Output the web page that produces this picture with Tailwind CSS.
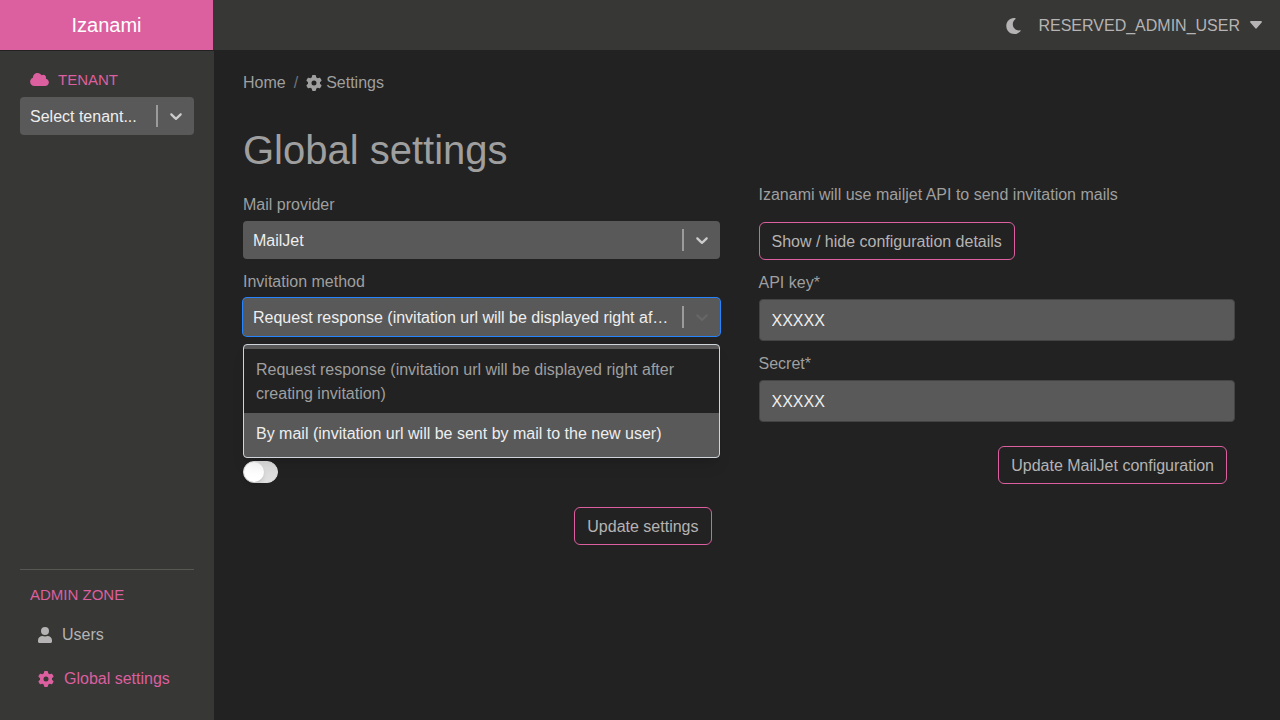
<!DOCTYPE html>
<html lang="en">
<head>
<meta charset="utf-8">
<meta name="viewport" content="width=device-width, initial-scale=1">
<title>Izanami - Global settings</title>
<script src="https://cdn.jsdelivr.net/npm/@tailwindcss/browser@4"></script>
</head>
<body class="flex min-h-screen flex-col bg-[#222222] font-['Liberation_Sans',Arial,sans-serif] text-base text-[#9f9f9f]">
<svg class="hidden" aria-hidden="true">
  <symbol id="gear" viewBox="0 0 512 512"><path fill="currentColor" d="M495.9 166.6c3.2 8.7 .5 18.4-6.4 24.6l-43.3 39.4c1.1 8.3 1.7 16.8 1.7 25.4s-.6 17.1-1.7 25.4l43.3 39.4c6.9 6.2 9.6 15.9 6.4 24.6c-4.4 11.9-9.7 23.3-15.8 34.3l-4.7 8.1c-6.6 11-14 21.4-22.1 31.2c-5.9 7.2-15.7 9.6-24.5 6.8l-55.7-17.7c-13.4 10.3-28.2 18.9-44 25.4l-12.5 57.1c-2 9.1-9 16.3-18.2 17.8c-13.8 2.3-28 3.5-42.5 3.5s-28.7-1.2-42.5-3.5c-9.2-1.5-16.2-8.7-18.2-17.8l-12.5-57.1c-15.8-6.5-30.6-15.1-44-25.4L83.100 425.9c-8.800 2.800-18.600 .3-24.500-6.800c-8.100-9.800-15.500-20.200-22.100-31.200l-4.700-8.100c-6.100-11-11.400-22.400-15.800-34.300c-3.200-8.700-.5-18.400 6.400-24.600l43.300-39.400C64.600 273.100 64 264.600 64 256s.6-17.100 1.700-25.400L22.400 191.200c-6.900-6.200-9.600-15.900-6.400-24.600c4.400-11.900 9.700-23.300 15.800-34.300l4.700-8.100c6.600-11 14-21.400 22.100-31.200c5.900-7.200 15.700-9.600 24.500-6.800l55.700 17.700c13.400-10.300 28.200-18.900 44-25.400l12.500-57.100c2-9.100 9-16.300 18.200-17.800C227.300 1.200 241.500 0 256 0s28.700 1.200 42.500 3.500c9.200 1.500 16.200 8.700 18.200 17.800l12.500 57.100c15.800 6.500 30.600 15.100 44 25.400l55.700-17.700c8.800-2.800 18.600-.3 24.500 6.800c8.100 9.800 15.500 20.200 22.100 31.200l4.700 8.100c6.100 11 11.400 22.400 15.800 34.300zM256 336a80 80 0 1 0 0-160 80 80 0 1 0 0 160z"/></symbol>
  <symbol id="chevron" viewBox="0 0 20 20"><path fill="currentColor" d="M4.516 7.548c0.436-0.446 1.043-0.481 1.576 0l3.908 3.747 3.908-3.747c0.533-0.481 1.141-0.446 1.574 0 0.436 0.445 0.408 1.197 0 1.615-0.406 0.418-4.695 4.502-4.695 4.502-0.217 0.223-0.502 0.335-0.787 0.335s-0.570-0.112-0.789-0.335c0 0-4.287-4.084-4.695-4.502s-0.436-1.170 0-1.615z"/></symbol>
</svg>

<header class="flex h-[51px] border-b border-[#222222] bg-[#373735]">
  <a href="#" class="flex w-[214px] items-center justify-center border-r border-[#373735] bg-[#dc5f9f] bg-clip-padding text-xl text-white">Izanami</a>
  <div class="flex flex-1 items-center justify-end gap-4 pt-px pr-4 text-[#b5b3b3]">
    <button type="button" aria-label="Switch theme">
      <svg class="h-4 w-4" viewBox="0 0 16 16"><path fill="currentColor" d="M9.200 .2C4 -.6 .3 3.400 .3 8s3.600 8 8 8c2.600 0 4.800-1.100 6.300-3 .3-.4 0-.8-.4-.7C10.300 13 6.800 10.100 6.800 6.200c0-2.200 1.100-4.200 2.800-5.200.3-.2.200-.7-.4-.8z"/></svg>
    </button>
    <button type="button" class="flex items-center gap-2">RESERVED_ADMIN_USER
      <svg class="h-4 w-4" viewBox="0 0 16 16" aria-hidden="true"><path fill="currentColor" d="M3 3h10c.9 0 1.300 1 .7 1.600l-5 5.700c-.4.500-1 .5-1.400 0l-5-5.700C1.700 4 2.100 3 3 3z"/></svg>
    </button>
  </div>
</header>

<div class="flex flex-1">
  <aside class="flex w-[214px] flex-col justify-between bg-[#373735] px-5 pt-[17px] pb-[23px]">
    <div>
      <label for="tenant" class="flex items-center gap-[9px] pl-[10px] text-[15px] leading-6 text-[#dc5f9f]">
        <svg class="-mt-px h-[15px] w-[19px]" viewBox="0 0 640 512" aria-hidden="true"><path fill="currentColor" d="M0 336c0 79.500 64.500 144 144 144H512c70.700 0 128-57.300 128-128c0-61.900-44-113.600-102.400-125.400c4.100-10.700 6.400-22.400 6.400-34.600c0-53-43-96-96-96c-19.700 0-38.100 6-53.300 16.200C367 64.200 315.300 32 256 32C167.600 32 96 103.600 96 192c0 2.700 .1 5.400 .2 8.100C40.200 219.800 0 273.200 0 336z"/></svg>
        TENANT
      </label>
      <div class="relative mt-[5px]">
        <select id="tenant" class="block h-[38px] w-full appearance-none rounded bg-[#595959] pt-0.5 pr-[50px] pl-[10px] text-ellipsis text-[#eeeeee]"><option>Select tenant...</option></select>
        <div class="pointer-events-none absolute inset-y-2 right-0 flex items-center border-l-2 border-[#9b9b9b] px-2 text-[#cccccc]"><svg class="h-5 w-5"><use href="#chevron"/></svg></div>
      </div>
    </div>
    <nav class="border-t border-[#575753] pt-[13px]">
      <div class="pl-[10px] text-[15px] leading-6 text-[#dc5f9f]">ADMIN ZONE</div>
      <a href="#" class="mt-[10px] flex h-9 items-center gap-[10px] pl-[18px] text-[#b5b3b3]">
        <svg class="h-4 w-[14px]" viewBox="0 0 448 512" aria-hidden="true"><path fill="currentColor" d="M224 256A128 128 0 1 0 224 0a128 128 0 1 0 0 256zM144 288C64 288 0 340 0 420v44c0 27 21 48 48 48H400c27 0 48-21 48-48V420c0-80-64-132-144-132c-20 0-45 14-80 14s-60-14-80-14z"/></svg>
        Users
      </a>
      <a href="#" class="mt-2 flex h-9 items-center gap-[10px] pl-[18px] text-[#dc5f9f]">
        <svg class="h-4 w-4" aria-hidden="true"><use href="#gear"/></svg>
        Global settings
      </a>
    </nav>
  </aside>

  <main class="flex-1 pt-5 pr-[45px] pl-[29px]">
    <nav aria-label="Breadcrumb" class="flex items-center gap-2">
      <a href="#">Home</a><span class="text-[#6c757d]">/</span>
      <a href="#" class="flex items-center gap-1"><svg class="h-4 w-4" aria-hidden="true"><use href="#gear"/></svg> Settings</a>
    </nav>
    <h1 class="mt-[31px] text-[40px] leading-[48px]">Global settings</h1>

    <div class="mt-[9px] grid grid-cols-2 gap-x-[39px]">
      <form class="flex flex-col pt-[10px]">
        <label for="provider">Mail provider</label>
        <div class="relative mt-1">
          <select id="provider" class="block h-[38px] w-full appearance-none rounded bg-[#595959] pt-0.5 pr-[50px] pl-[10px] text-[#eeeeee]"><option>MailJet</option></select>
          <div class="pointer-events-none absolute inset-y-2 right-0 flex items-center border-l-2 border-[#9b9b9b] px-2 text-[#cccccc]"><svg class="h-5 w-5"><use href="#chevron"/></svg></div>
        </div>
        <label for="method" class="mt-[11px]">Invitation method</label>
        <div class="relative mt-1">
          <select id="method" class="block h-[38px] w-full appearance-none overflow-hidden rounded bg-[#595959] pt-0.5 pr-[50px] pl-[10px] text-ellipsis whitespace-nowrap text-[#eeeeee] ring-1 ring-[#2684ff]"><option>Request response (invitation url will be displayed right after creating invitation)</option><option>By mail (invitation url will be sent by mail to the new user)</option></select>
          <div class="pointer-events-none absolute inset-y-2 right-0 flex items-center border-l-2 border-[#9b9b9b] px-2 text-[#666666]"><svg class="h-5 w-5"><use href="#chevron"/></svg></div>
          <ul role="listbox" aria-label="Invitation method" class="absolute inset-x-0 top-full z-10 mt-2 rounded border border-[#ced4da] bg-[#595959] py-1 shadow-lg">
            <li role="option" aria-selected="true" class="bg-[#222222] px-3 pt-[9px] pb-[7px]">Request response (invitation url will be displayed right after creating invitation)</li>
            <li role="option" aria-selected="false" class="px-3 pt-[9px] pb-[7px] text-[#eeeeee]">By mail (invitation url will be sent by mail to the new user)</li>
          </ul>
        </div>
        <label class="mt-[125px] flex h-[22px] w-[35px]">
          <input type="checkbox" role="switch" aria-label="Anonymous reporting" class="h-[22px] w-[35px] appearance-none rounded-full border border-[#dfdfdf] bg-[#dfdfdf] before:block before:h-5 before:w-5 before:rounded-full before:bg-white before:shadow-md before:content-['']">
        </label>
        <button type="button" class="mt-6 mr-2 h-[38px] self-end rounded-md border border-[#dc5f9f] px-3 pt-px text-[#b5b3b3]">Update settings</button>
      </form>

      <form class="flex flex-col">
        <p>Izanami will use mailjet API to send invitation mails</p>
        <button type="button" class="mt-[15px] h-[38px] self-start rounded-md border border-[#dc5f9f] px-3 pt-px text-[#b5b3b3]">Show / hide configuration details</button>
        <label for="apikey" class="mt-[11px]">API key*</label>
        <input id="apikey" type="text" value="XXXXX" class="mt-1 h-[42px] w-full rounded border border-[#444444] bg-[#595959] px-3 pt-0.5 text-[#eeeeee]">
        <label for="secret" class="mt-[11px]">Secret*</label>
        <input id="secret" type="text" value="XXXXX" class="mt-1 h-[42px] w-full rounded border border-[#444444] bg-[#595959] px-3 pt-0.5 text-[#eeeeee]">
        <button type="button" class="mt-6 mr-2 h-[38px] self-end rounded-md border border-[#dc5f9f] px-3 pt-px text-[#b5b3b3]">Update MailJet configuration</button>
      </form>
    </div>
  </main>
</div>
</body>
</html>
